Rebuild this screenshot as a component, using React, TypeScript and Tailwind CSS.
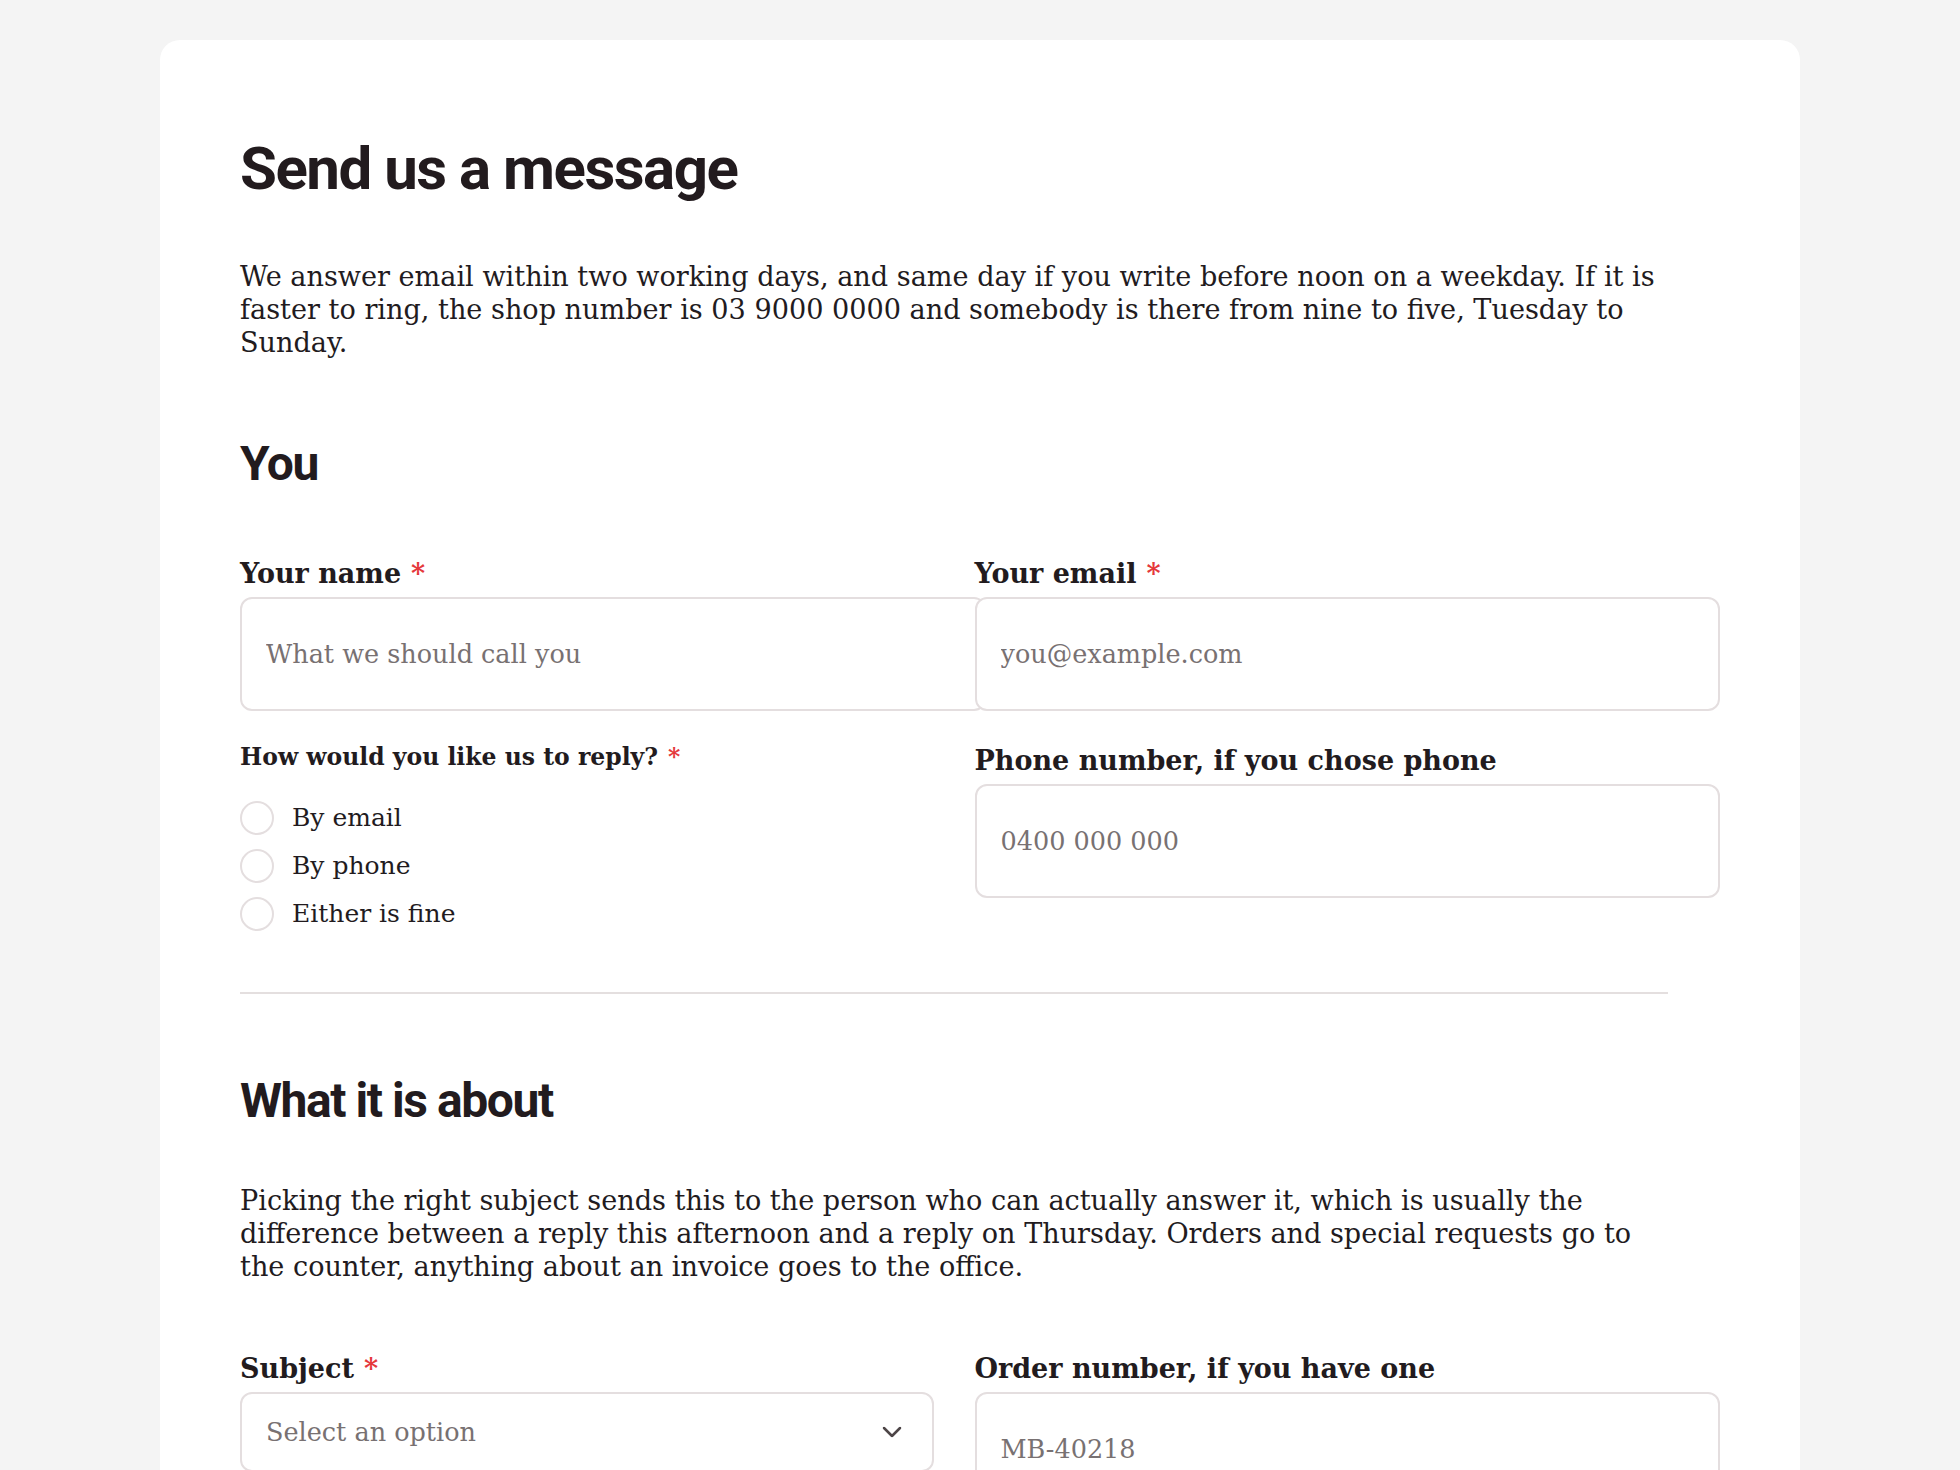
import { ReactNode } from 'react';

const ink = 'text-[#221b1e]';

function Required() {
  return <span className="ml-[10px] text-[#e5383b]">*</span>;
}

function FieldLabel({ children, required }: { children: ReactNode; required?: boolean }) {
  return (
    <label className={`mb-[5px] block text-[27px] font-bold leading-9 ${ink}`}>
      {children}
      {required && <Required />}
    </label>
  );
}

function TextField({
  label,
  placeholder,
  required,
  type = 'text',
}: {
  label: string;
  placeholder: string;
  required?: boolean;
  type?: string;
}) {
  return (
    <div className="flex flex-col">
      <FieldLabel required={required}>{label}</FieldLabel>
      <input
        type={type}
        placeholder={placeholder}
        className="box-content h-[62px] w-full rounded-xl border-2 border-[#e4dedf] bg-white px-6 py-6 text-[25.5px] text-[#221b1e] outline-none placeholder:text-[#787172]"
      />
    </div>
  );
}

function SelectField({ label, required }: { label: string; required?: boolean }) {
  return (
    <div className="flex flex-col">
      <FieldLabel required={required}>{label}</FieldLabel>
      <div className="relative">
        <select
          defaultValue=""
          className="h-20 w-full appearance-none rounded-xl border-2 border-[#e4dedf] bg-white px-6 text-[25.5px] text-[#787172] outline-none"
        >
          <option value="" disabled>
            Select an option
          </option>
          <option>An order</option>
          <option>A special request</option>
          <option>An invoice</option>
          <option>Something else</option>
        </select>
        {/* chevron */}
        <svg
          className="pointer-events-none absolute right-8 top-1/2 -translate-y-1/2"
          width="20"
          height="11"
          viewBox="0 0 20 11"
          fill="none"
        >
          <path d="M2 1.5l8 8 8-8" stroke="#4d4547" strokeWidth="2.5" strokeLinecap="round" strokeLinejoin="round" />
        </svg>
      </div>
    </div>
  );
}

const replyOptions = ['By email', 'By phone', 'Either is fine'];

function ReplyChoice() {
  return (
    <div>
      <div className={`text-[23.5px] font-bold leading-[29px] ${ink}`}>
        How would you like us to reply?
        <Required />
      </div>
      <div className="mt-[22px] flex flex-col">
        {replyOptions.map((opt) => (
          <label key={opt} className={`flex h-12 items-center gap-[18px] text-[25px] ${ink}`}>
            <span className="size-[34px] shrink-0 rounded-full border-2 border-[#e4dedf] bg-white" />
            {opt}
          </label>
        ))}
      </div>
    </div>
  );
}

export default function App() {
  return (
    <div className="min-h-screen bg-[#f4f4f4] px-[160px] pt-10 font-['DejaVu_Serif',serif]">
      <div className="rounded-[20px] bg-white px-20 pt-24 pb-20">
        <div className="max-w-[1428px]">
          <h1 className={`font-['Roboto',sans-serif] text-[60px] font-bold leading-[66px] tracking-[-0.025em] ${ink}`}>
            Send us a message
          </h1>
          <p className={`mt-[58px] text-[27.1px] leading-[33px] ${ink}`}>
            We answer email within two working days, and same day if you write before noon on a weekday. If it is
            faster to ring, the shop number is 03 9000 0000 and somebody is there from nine to five, Tuesday to
            Sunday.
          </p>

          {/* You */}
          <h2 className={`mt-[78px] font-['Roboto',sans-serif] text-[48px] font-bold leading-[53px] tracking-[-0.03em] ${ink}`}>
            You
          </h2>
          <div className="mt-[66px] grid grid-cols-2 gap-x-[41px] gap-y-8">
            <TextField label="Your name" placeholder="What we should call you" required />
            <TextField label="Your email" placeholder="you@example.com" type="email" required />
            <ReplyChoice />
            <div className="self-start">
              <TextField label="Phone number, if you chose phone" placeholder="0400 000 000" type="tel" />
            </div>
          </div>

          <div className="mt-[54px] h-[2px] bg-[#e4dfdf]" />

          {/* What it is about */}
          <h2 className={`mt-[80px] font-['Roboto',sans-serif] text-[48px] font-bold leading-[53px] tracking-[-0.03em] ${ink}`}>
            What it is about
          </h2>
          <p className={`mt-[57px] text-[27.1px] leading-[33px] ${ink}`}>
            Picking the right subject sends this to the person who can actually answer it, which is usually the
            difference between a reply this afternoon and a reply on Thursday. Orders and special requests go to
            the counter, anything about an invoice goes to the office.
          </p>
          <div className="mt-[68px] grid grid-cols-2 gap-x-[41px] gap-y-8">
            <SelectField label="Subject" required />
            <TextField label="Order number, if you have one" placeholder="MB-40218" />
          </div>
        </div>
      </div>
    </div>
  );
}
